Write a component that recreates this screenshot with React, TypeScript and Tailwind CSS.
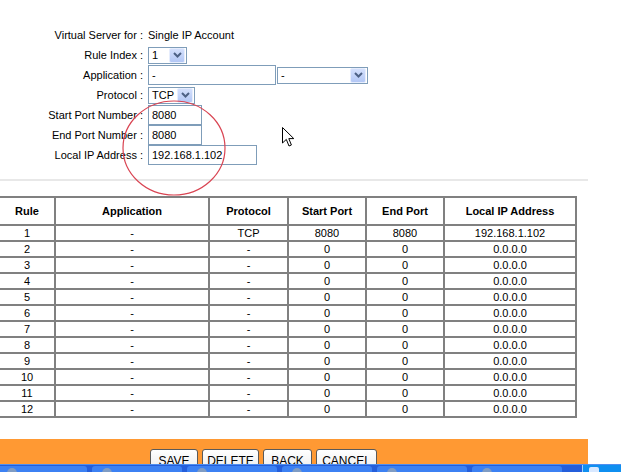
import React from 'react';

// Rows of the virtual server table
interface Rule {
  id: number;
  app: string;
  protocol: string;
  start: string;
  end: string;
  ip: string;
}

const rules: Rule[] = Array.from({ length: 12 }, (_, i) =>
  i === 0
    ? { id: 1, app: '-', protocol: 'TCP', start: '8080', end: '8080', ip: '192.168.1.102' }
    : { id: i + 1, app: '-', protocol: '-', start: '0', end: '0', ip: '0.0.0.0' }
);

const font = { fontFamily: '"Liberation Sans", Arial, sans-serif' };

// XP style dropdown arrow button
const DropArrow = () => (
  <span className="flex h-[15px] w-[16px] shrink-0 items-center justify-center rounded-[2px] border border-[#e6edfd] bg-gradient-to-b from-[#d4e0fc] to-[#b3c7f5]">
    <svg width="9" height="6" viewBox="0 0 9 6">
      <path d="M1 1 L4.5 4.5 L8 1" stroke="#4d6185" strokeWidth="2" fill="none" />
    </svg>
  </span>
);

const Select = ({ value, width }: { value: string; width: string }) => (
  <div className={`flex h-[17px] items-center justify-between border border-[#7f9db9] bg-white pl-[3px] pr-px ${width}`}>
    <span className="leading-none">{value}</span>
    <DropArrow />
  </div>
);

const TextBox = ({ value, width }: { value: string; width: string }) => (
  <div className={`flex h-[20px] items-center border border-[#7f9db9] bg-white pl-[3px] ${width}`}>
    {value}
  </div>
);

const FormRow = ({ label, children }: { label: string; children: React.ReactNode }) => (
  <div className="grid h-[20px] grid-cols-[143px_1fr] items-center gap-x-[5px]">
    <div className="whitespace-nowrap text-right">{label}</div>
    <div className="flex items-center">{children}</div>
  </div>
);

const cell = 'border border-[#808080] p-0 text-center';

export default function App() {
  return (
    <div className="relative h-[472px] w-[621px] overflow-hidden bg-white text-[11px] text-black" style={font}>
      {/* Form */}
      <div className="pt-[25px]">
        <FormRow label="Virtual Server for :">
          <span>Single IP Account</span>
        </FormRow>
        <FormRow label="Rule Index :">
          <Select value="1" width="w-[39px]" />
        </FormRow>
        <FormRow label="Application :">
          <TextBox value="-" width="w-[128px]" />
          <div className="ml-px">
            <Select value="-" width="w-[91px]" />
          </div>
        </FormRow>
        <FormRow label="Protocol :">
          <Select value="TCP" width="w-[47px]" />
        </FormRow>
        <FormRow label="Start Port Number :">
          <TextBox value="8080" width="w-[54px]" />
        </FormRow>
        <FormRow label="End Port Number :">
          <TextBox value="8080" width="w-[54px]" />
        </FormRow>
        <FormRow label="Local IP Address :">
          <TextBox value="192.168.1.102" width="w-[109px]" />
        </FormRow>
      </div>

      <div className="mt-[14px] h-[2px] w-[588px] bg-[#e8e8e8]" />

      {/* Rule table */}
      <table className="-ml-[2px] mt-[15px] w-[579px] table-fixed border-separate border-spacing-0 border border-[#808080]">
        <colgroup>
          <col className="w-[56px]" />
          <col className="w-[154px]" />
          <col className="w-[79px]" />
          <col className="w-[78px]" />
          <col className="w-[78px]" />
          <col />
        </colgroup>
        <thead>
          <tr className="h-[28px] font-bold">
            <th className={cell}>Rule</th>
            <th className={cell}>Application</th>
            <th className={cell}>Protocol</th>
            <th className={cell}>Start Port</th>
            <th className={cell}>End Port</th>
            <th className={cell}>Local IP Address</th>
          </tr>
        </thead>
        <tbody>
          {rules.map((r) => (
            <tr key={r.id} className="h-[16px] leading-[14px]">
              <td className={cell}>{r.id}</td>
              <td className={cell}>{r.app}</td>
              <td className={cell}>{r.protocol}</td>
              <td className={cell}>{r.start}</td>
              <td className={cell}>{r.end}</td>
              <td className={cell}>{r.ip}</td>
            </tr>
          ))}
        </tbody>
      </table>

      {/* Orange button bar */}
      <div className="mt-[21px] flex h-[25px] w-[588px] gap-[4px] overflow-hidden bg-[#ff9933] pl-[150px] pt-[10px]">
        {[
          ['SAVE', 'w-[48px]'],
          ['DELETE', 'w-[57px]'],
          ['BACK', 'w-[49px]'],
          ['CANCEL', 'w-[61px]'],
        ].map(([label, w]) => (
          <div
            key={label}
            className={`flex h-[22px] items-start justify-center rounded-t-[3px] border border-[#5a5a5a] bg-gradient-to-b from-white to-[#ececec] pt-[5px] text-[12px] leading-none ${w}`}
          >
            {label}
          </div>
        ))}
      </div>

      {/* Windows taskbar */}
      <div className="flex h-[8px] w-full border-t border-[#4f8ff0] bg-[#245edb]">
        <div className="flex flex-1 gap-[5px] overflow-hidden pt-[1px]">
          {[0, 1, 2, 3, 4, 5].map((i) => (
            <div key={i} className="relative h-[8px] w-[90px] shrink-0 rounded-t-[3px] bg-[#3c81f3] first:-ml-[3px]">
              <span className="ml-[10px] mt-[2px] block h-[5px] w-[10px] rounded-t-full bg-[#7f9cc4]" />
            </div>
          ))}
        </div>
        <div className="w-[39px] shrink-0 border-l border-[#9fd0ff] bg-[#0f8ff0]">
          <span className="ml-[6px] mt-[2px] block h-[5px] w-[10px] rounded-t-[2px] bg-[#d8e8ff]" />
        </div>
      </div>

      {/* Red annotation circle */}
      <svg className="pointer-events-none absolute left-[121px] top-[99px]" width="106" height="98" viewBox="0 0 106 98">
        <ellipse cx="53" cy="49" rx="51" ry="47" fill="none" stroke="#d94452" strokeWidth="1.2" />
      </svg>

      {/* Mouse cursor */}
      <svg className="pointer-events-none absolute left-[282px] top-[127px]" width="13" height="21" viewBox="0 0 13 21">
        <path d="M0.5 0.5 L0.5 16 L4.3 12.4 L7 19 L9.4 18 L6.8 11.6 L11.8 11.6 Z" fill="white" stroke="black" strokeWidth="1" strokeLinejoin="miter" />
      </svg>
    </div>
  );
}
